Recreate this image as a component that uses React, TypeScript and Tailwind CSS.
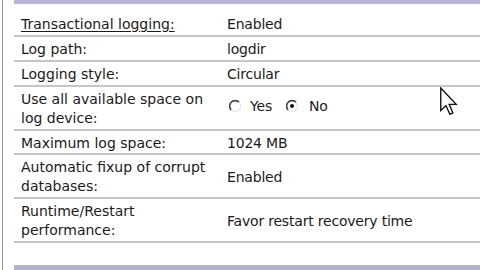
import React from "react";

type Row = {
  label: React.ReactNode;
  value: React.ReactNode;
  h: string;
  extra?: string;
};

function Radio({ checked }: { checked?: boolean }) {
  return (
    <svg width="12" height="12" viewBox="0 0 12 12" className="shrink-0">
      <path d="M10 2.2 A5 5 0 1 0 2.2 10" fill="none" stroke="#404040" strokeWidth="1.6" />
      <path d="M2.2 10 A5 5 0 0 0 10 2.2" fill="none" stroke="#e8e8e8" strokeWidth="1.2" />
      {checked && <circle cx="6" cy="6" r="2" fill="#111" />}
    </svg>
  );
}

function Cursor() {
  return (
    <svg
      width="18"
      height="29"
      viewBox="0 0 12 19"
      className="absolute left-[440px] top-[87px]"
    >
      <path
        d="M0.5 0.5 L0.5 15.5 L4 12.2 L6.6 18 L8.6 17.1 L6.1 11.4 L10.8 11.4 Z"
        fill="#fff"
        stroke="#111"
        strokeWidth="0.9"
        strokeLinejoin="miter"
      />
    </svg>
  );
}

const rows: Row[] = [
  {
    label: <span className="underline underline-offset-2">Transactional logging:</span>,
    value: "Enabled",
    h: "h-[33px]",
    extra: "pt-[9px]",
  },
  { label: "Log path:", value: "logdir", h: "h-[25px]", extra: "pt-[2px]" },
  { label: "Logging style:", value: "Circular", h: "h-[25px]", extra: "pt-[2px]" },
  {
    label: (
      <>
        Use all available space on
        <br />
        log device:
      </>
    ),
    value: (
      <div className="flex items-center pb-[6px]">
        <span className="ml-[2px]">
          <Radio />
        </span>
        <span className="ml-[9px]">Yes</span>
        <span className="ml-[14px]">
          <Radio checked />
        </span>
        <span className="ml-[11px]">No</span>
      </div>
    ),
    h: "h-[44px]",
    extra: "pt-[2px]",
  },
  { label: "Maximum log space:", value: "1024 MB", h: "h-[24px]", extra: "pt-[2px]" },
  {
    label: (
      <>
        Automatic fixup of corrupt
        <br />
        databases:
      </>
    ),
    value: "Enabled",
    h: "h-[44px]",
    extra: "pt-[2px]",
  },
  {
    label: (
      <>
        Runtime/Restart
        <br />
        performance:
      </>
    ),
    value: "Favor restart recovery time",
    h: "h-[44px]",
    extra: "pt-[2px]",
  },
];

export default function App() {
  return (
    <div
      className="relative w-[480px] h-[270px] overflow-hidden bg-white flex text-[14px] leading-[19px] text-[#1a1a1a]"
      style={{ fontFamily: '"DejaVu Sans", Verdana, sans-serif' }}
    >
      <div className="w-[14px] shrink-0 flex">
        <div className="ml-[2px] w-[1px] h-full bg-[#9c9c9c]" />
      </div>
      <div className="flex-1 flex flex-col">
        <div className="h-[4px] bg-[#b6b6d6]" />
        {rows.map((r, i) => (
          <div
            key={i}
            className={`grid grid-cols-[213px_1fr] items-center border-b-2 border-[#c6c6c6] ${r.h} ${r.extra ?? ""}`}
          >
            <div className="pl-[7px]">{r.label}</div>
            <div className="tracking-[-0.2px]">{r.value}</div>
          </div>
        ))}
        <div className="flex-1" />
        <div className="h-[5px] bg-[#b2b2d0]" />
      </div>
      <Cursor />
    </div>
  );
}
